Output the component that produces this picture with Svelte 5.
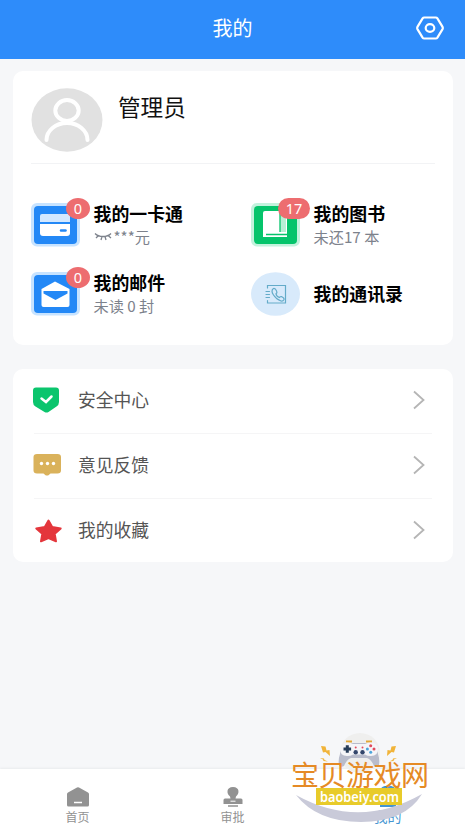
<script>
	const services = [
		{ icon: 'card', title: '我的一卡通', note: '***元', badge: '0' },
		{ icon: 'book', title: '我的图书', note: '未还17 本', badge: '17' },
		{ icon: 'mail', title: '我的邮件', note: '未读 0 封', badge: '0' },
		{ icon: 'contacts', title: '我的通讯录' },
	];

	const links = [
		{ icon: 'shield', label: '安全中心' },
		{ icon: 'feedback', label: '意见反馈' },
		{ icon: 'star', label: '我的收藏' },
	];

	const tabs = [
		{ icon: 'home', label: '首页' },
		{ icon: 'stamp', label: '审批' },
		{ icon: 'mine', label: '我的' },
	];

	let current = 'mine';
</script>

<div class="page">
	<header>
		<h1>我的</h1>
		<svg class="settings" width="28" height="24" viewBox="0 0 28 24">
			<path d="M8.2 1.5h11.6q1 0 1.6.9l5 8.2q.8 1.4 0 2.8l-5 8.2q-.6.9-1.6.9H8.2q-1 0-1.6-.9l-5-8.2q-.8-1.4 0-2.8l5-8.2q.6-.9 1.6-.9z" />
			<ellipse cx="14" cy="12" rx="4.3" ry="3.9" />
		</svg>
	</header>

	<main>
		<section class="card profile">
			<div class="user">
				<svg width="72" height="64" viewBox="0 0 72 64">
					<ellipse cx="36" cy="32" rx="35.5" ry="31.7" fill="#e1e1e1" />
					<g fill="none" stroke="#fff" stroke-width="4" stroke-linecap="round">
						<ellipse cx="36" cy="22.500" rx="11.7" ry="10.4" />
						<path d="M15.500 52a20.500 17 0 0 1 41 0" />
					</g>
				</svg>
				<h2>管理员</h2>
			</div>

			<div class="services">
				{#each services as item}
					<div class="service">
						<div class="icon">
							{#if item.icon === 'contacts'}
								<svg width="50" height="44" viewBox="0 0 50 44">
									<ellipse cx="24.500" cy="22" rx="24.500" ry="21.800" fill="#d8eafb" />
									<g fill="none" stroke="#64abc9" stroke-width="1.200" stroke-linecap="round">
										<path d="M16.500 16v-2.500h18v17.500h-18v-2.500M15 19.500h3.500M15 22.500h3.500M15 25.500h3.500" />
										<path d="M22.500 16.500q-3 2 0 6.500t7.500 6q2 .5 3-1.500.5-1.500-2.500-3-1.500 0-2 1-3-1-3.500-3.700 1.500-1 .6-2.800-1.400-3-3.100-2.500z" />
									</g>
								</svg>
							{:else}
								<svg width="50" height="44" viewBox="0 0 50 44">
									{#if item.icon === 'book'}
										<rect x="0" y="0" width="49" height="43.500" rx="6" fill="#c3f2dd" />
										<rect x="3" y="3" width="43" height="38" rx="4" fill="#05c46b" />
										<path d="M14 8h22v26H12V10q0-2 2-2z" fill="#fff" />
										<path d="M29 8h6v21h-6z" fill="#b9efd5" />
										<path d="M15 31.500h21M29 9v20" fill="none" stroke="#05c46b" stroke-width="1.300" />
									{:else}
										<rect x="0" y="0" width="49" height="43.500" rx="6" fill="#c7e3ff" />
										<rect x="3" y="3" width="43" height="38" rx="4" fill="#2388f6" />
										{#if item.icon === 'card'}
											<path d="M11 11h26q2 0 2 2v6H9v-6q0-2 2-2z" fill="#d3e8ff" />
											<path d="M9 21h30v9q0 3-3 3H12q-3 0-3-3z" fill="#fff" />
											<path d="M30 27.500h4.500" stroke="#2388f6" stroke-width="2.500" stroke-linecap="round" />
										{:else}
											<path d="M10.500 17L24 9.500 38.500 17v16q0 2-2 2h-24q-2 0-2-2z" fill="#fff" />
											<path d="M12.500 19h24v2.500L24.500 28l-12-6.500z" fill="#2388f6" />
										{/if}
									{/if}
								</svg>
							{/if}
							{#if item.badge}
								<span class="badge" class:wide={item.badge.length > 1}>{item.badge}</span>
							{/if}
						</div>
						<div class="info">
							<strong>{item.title}</strong>
							{#if item.note}
								<p>
									{#if item.icon === 'card'}
										<svg width="18" height="9" viewBox="0 0 18 9" fill="none" stroke="#7d828c" stroke-width="1.300">
											<path d="M1 1.500q3 3 8 3t8-3M4.500 3.500L2 6M8 4.500L7 8M11 4.500l1 3.500M14 3.500L17 6" />
										</svg>
									{/if}
									{item.note}
								</p>
							{/if}
						</div>
					</div>
				{/each}
			</div>
		</section>

		<section class="card links">
			{#each links as link}
				<div class="link">
					<svg width="30" height="28" viewBox="0 0 30 28">
						{#if link.icon === 'shield'}
							<path d="M2 1.500h20q3 0 3 3v11.500q0 3-2.500 4.500L14.500 26q-2 1-4 0L1.500 20.500Q-1 19-1 16V4.500q0-3 3-3z" fill="#0bc56d" />
							<path d="M7.500 12.500L12 16l5.500-5.500" fill="none" stroke="#fff" stroke-width="2.500" stroke-linecap="round" />
						{:else if link.icon === 'feedback'}
							<path d="M3 3h20.500Q27 3 27 6v13.500q0 3-3.500 3H16.500l-2 1.700q-1.500.8-3 0l-2-1.700H3q-3.500 0-3.500-3V6Q-.5 3 3 3z" fill="#dab25b" />
							<g fill="#fff"><circle cx="7.500" cy="12.500" r="1.700" /><circle cx="13.500" cy="12.500" r="1.700" /><circle cx="19.500" cy="12.500" r="1.700" /></g>
						{:else}
							<path d="M14.500 4.500l3.700 6.600 8.500 1.300-6 5.400 1.300 7.500-7.500-3.300L7 25.300l1.300-7.500-6-5.400 8.500-1.300z" fill="#e4363c" stroke="#e4363c" stroke-width="2" stroke-linejoin="round" />
						{/if}
					</svg>
					<span>{link.label}</span>
					<svg class="arrow" width="12" height="20" viewBox="0 0 12 20">
						<path d="M1 1.500l9.500 8.500L1 18.500" />
					</svg>
				</div>
			{/each}
		</section>
	</main>

	<nav>
		{#each tabs as tab}
			<div class="tab" class:active={tab.icon === current}>
				<svg width="24" height="22" viewBox="0 0 24 22" fill="currentColor">
					{#if tab.icon === 'home'}
						<path d="M2 6.500L11 1.500q1-.5 2 0l9 5q1 .5 1 1.500v11q0 1.500-1.500 1.500h-19Q1 20.500 1 19V8q0-1 1-1.500z" />
						<path d="M8 16.500h8" stroke="#fff" stroke-width="1.500" />
					{:else if tab.icon === 'stamp'}
						<path d="M12 1c7 0 6.500 7 3 9.500l-.5 2H20q1.500 0 1.500 1.500v4h-19v-4q0-1.500 1.500-1.500h5.500l-.5-2C5.500 8 5 1 12 1z" />
						<path d="M9.500 15.200h5" stroke="#fff" />
						<path d="M7 20h10" stroke="currentColor" stroke-width="1.500" />
					{:else}
						<ellipse cx="12" cy="5" rx="8" ry="5.500" />
						<path d="M4 21v-3q1-6 8-6t8 6v3z" />
					{/if}
				</svg>
				<span>{tab.label}</span>
			</div>
		{/each}
	</nav>

	<svg class="watermark" width="150" height="94" viewBox="0 0 150 94">
		<circle cx="70" cy="20" r="20" fill="#efefee" />
		<path d="M6 62Q69 97 132 61Q115 89 71 89Q27 89 6 62z" fill="#c9cad9" />
		<path d="M56 8.500h6M76 8.500h6" stroke="#e3a735" stroke-width="2" />
		<path d="M57 10h24q6 1 7 11 2 6 1 11-2 3-5 1-3-7-7-8H61q-4 1-7 8-3 2-5-1-1-5 1-11 1-10 7-11z" fill="#b9bccb" />
		<path d="M57 9.500q4 0 6 1.500h12q2-1.500 6-1.500 7 1 7 7t-7 6.500q-4 0-6-1.500H63q-2 1.500-6 1.500-7-.5-7-6.500t7-7z" fill="#f5f5f8" />
		<path d="M57.300 12.200v7.600M53.500 16h7.600" stroke="#273d59" stroke-width="3" />
		<g fill="#34466b"><circle cx="65.700" cy="19.300" r="2.200" /><circle cx="72.500" cy="19.300" r="2.200" /></g>
		<g fill="#e14b5d"><circle cx="65.700" cy="14.500" r="1" /><circle cx="72.500" cy="14.500" r="1" /><circle cx="80.700" cy="12.700" r="1.500" /><circle cx="84" cy="16" r="1.500" /></g>
		<g fill="#4ca5dc"><circle cx="77.400" cy="16" r="1.500" /><circle cx="80.700" cy="19.300" r="1.500" /></g>
		<g fill="#f1b43a">
			<path d="M31 13l4.500.5 1 4 3-.5.500 6-4.500-4-2.500.5zM30 25l4 .5.5 1.500 3.500 1.500-4.500-.5-.5-1.500z" />
			<path d="M106 13l-4.500.5-1 4-3-.5-.500 6 4.500-4 2.500.5zM107 25l-4 .5-.5 1.500-3.500 1.500 4.500-.5.5-1.500z" />
		</g>
		<rect x="26" y="55" width="86" height="17" fill="#e8cb2a" />
		<text class="site" x="1" y="53" textLength="138">宝贝游戏网</text>
		<text class="domain" x="30" y="68.500" textLength="79" lengthAdjust="spacingAndGlyphs">baobeiy.com</text>
	</svg>
</div>

<style>
	:global(body) {
		margin: 0;
	}

	.page {
		position: relative;
		display: flex;
		flex-direction: column;
		height: 827px;
		overflow: hidden;
		background: #f6f7f9;
		font-family: "Noto Sans CJK SC", sans-serif;
		color: #111;
	}

	h1, h2, p {
		margin: 0;
		font-weight: 400;
	}

	header {
		display: grid;
		grid-template-columns: 1fr auto 1fr;
		align-items: center;
		height: 59px;
		padding: 0 21px 4px;
		box-sizing: border-box;
		background: #2e8cfa;
		color: #fff;
	}

	h1 {
		grid-column: 2;
		font-size: 20px;
		line-height: 28px;
	}

	.settings {
		justify-self: end;
		fill: none;
		stroke: #fff;
		stroke-width: 2.2;
	}

	main {
		flex: 1;
		padding: 12px 12px 0 13px;
	}

	.card {
		background: #fff;
		border-radius: 10px;
	}

	.profile {
		height: 274px;
		padding: 0 18px;
		box-sizing: border-box;
	}

	.user {
		display: flex;
		gap: 15px;
		height: 93px;
		padding-top: 17px;
		box-sizing: border-box;
		border-bottom: 1px solid #f2f3f5;
	}

	.user svg {
		flex: none;
	}

	h2 {
		font-size: 22.6px;
		line-height: 37px;
	}

	.services {
		display: grid;
		grid-template-columns: 220px 1fr;
		grid-auto-rows: 69px;
		padding-top: 39px;
	}

	.service {
		display: flex;
		gap: 12.5px;
	}

	.icon {
		position: relative;
		width: 50px;
		height: 44px;
	}

	.badge {
		position: absolute;
		top: -5px;
		left: 35px;
		width: 24px;
		height: 21px;
		border-radius: 50%;
		background: #ed6d70;
		color: #fff;
		font: 14.5px/21px "Noto Sans", sans-serif;
		text-align: center;
	}

	.badge.wide {
		left: 27px;
		width: 32px;
		border-radius: 12px;
	}

	.info {
		display: flex;
		flex-direction: column;
		justify-content: center;
		height: 43px;
		white-space: nowrap;
	}

	strong {
		color: #000;
		font-size: 17.9px;
		font-weight: 700;
		line-height: 23px;
	}

	.info p {
		display: flex;
		align-items: center;
		gap: 2px;
		color: #7d828c;
		font-size: 15.2px;
		line-height: 23px;
	}

	.links {
		height: 193px;
		margin-top: 24px;
		padding: 0 21px;
		box-sizing: border-box;
	}

	.link {
		display: flex;
		align-items: center;
		height: 65px;
		padding-right: 7px;
		padding-bottom: 2px;
		box-sizing: border-box;
		border-bottom: 1px solid #f5f5f6;
		color: #555;
		font-size: 17.8px;
	}

	.link > svg {
		overflow: visible;
	}

	.link:last-child {
		border-color: transparent;
	}

	.link span {
		flex: 1;
		margin-left: 14px;
		padding-bottom: 2px;
		line-height: 24px;
	}

	.arrow {
		fill: none;
		stroke: #b5b5b5;
		stroke-width: 1.8;
	}

	nav {
		display: flex;
		height: 58px;
		background: #fff;
		box-shadow: 0 -1px 2px #e9ebed;
	}

	.tab {
		display: flex;
		flex: 1;
		flex-direction: column;
		align-items: center;
		padding-top: 17px;
		color: #929292;
		font-size: 12px;
		line-height: 17px;
	}

	.tab.active {
		color: #4596d2;
		font-size: 14px;
	}

	.watermark {
		position: absolute;
		top: 733px;
		left: 290px;
	}

	.site {
		fill: #e58a25;
		font-size: 28px;
		font-weight: 400;
	}

	.domain {
		fill: #fff;
		font: 600 15px "Noto Sans", sans-serif;
	}
</style>
